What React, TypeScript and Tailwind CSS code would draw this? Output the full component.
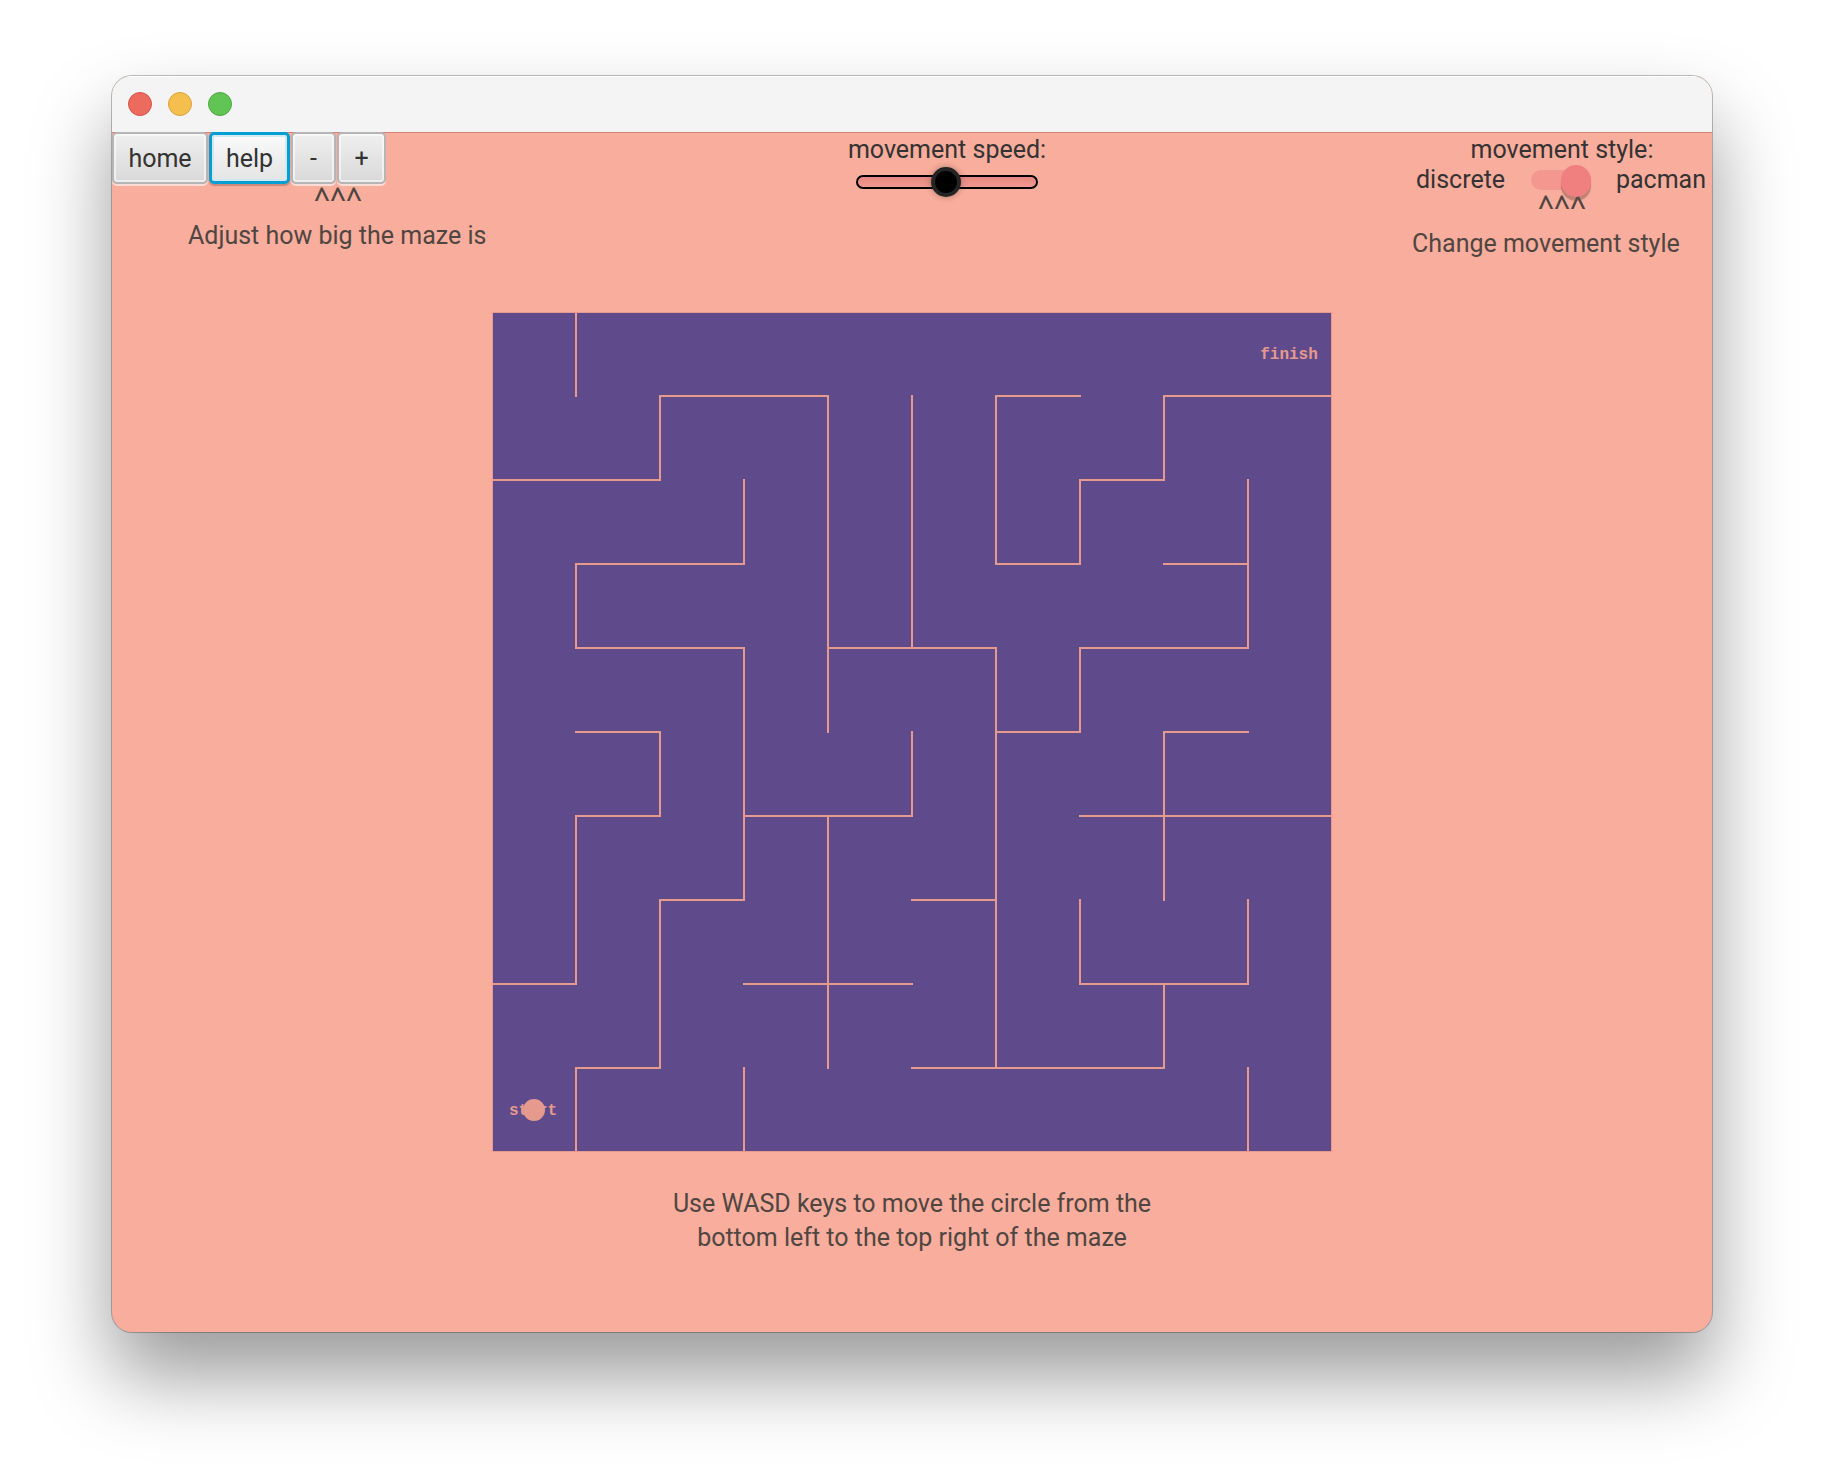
import { useState } from "react";

const CELL = 84;

// [line index, from, to] in cell units
const verticalWalls = [
  [1, 0, 1], [1, 3, 4], [1, 6, 8], [1, 9, 10],
  [2, 1, 2], [2, 5, 6], [2, 7, 9],
  [3, 2, 3], [3, 4, 7], [3, 9, 10],
  [4, 1, 5], [4, 6, 9],
  [5, 1, 4], [5, 5, 6],
  [6, 1, 3], [6, 4, 9],
  [7, 2, 3], [7, 4, 5], [7, 7, 8],
  [8, 1, 2], [8, 5, 7], [8, 8, 9],
  [9, 2, 4], [9, 7, 8], [9, 9, 10],
];

const horizontalWalls = [
  [1, 2, 4], [1, 6, 7], [1, 8, 10],
  [2, 0, 2], [2, 7, 8],
  [3, 1, 3], [3, 6, 7], [3, 8, 9],
  [4, 1, 3], [4, 4, 6], [4, 7, 9],
  [5, 1, 2], [5, 6, 7], [5, 8, 9],
  [6, 1, 2], [6, 3, 5], [6, 7, 10],
  [7, 2, 3], [7, 5, 6],
  [8, 0, 1], [8, 3, 5], [8, 7, 9],
  [9, 1, 2], [9, 5, 8],
];

const wallPath =
  verticalWalls.map(([x, a, b]) => `M${x * CELL} ${a * CELL}V${b * CELL}`).join("") +
  horizontalWalls.map(([y, a, b]) => `M${a * CELL} ${y * CELL}H${b * CELL}`).join("");

function Maze() {
  return (
    <svg viewBox="0 0 840 840" className="block w-full max-w-[840px]" role="img" aria-label="Maze">
      <rect width="840" height="840" fill="#5f4b8b" />
      <path d={wallPath} fill="none" stroke="#e69a8d" strokeWidth="2" strokeLinecap="square" />
      <rect width="840" height="840" fill="none" stroke="#e69a8d" strokeWidth="2" />
      <g
        fill="#e69a8d"
        fontSize="16"
        fontWeight="700"
        fontFamily="'Liberation Mono', monospace"
        textAnchor="middle"
      >
        <text x="41" y="803">start</text>
        <text x="797" y="47">finish</text>
      </g>
      <circle cx="42" cy="798" r="11" fill="#e69a8d" />
    </svg>
  );
}

function ToolButton({ label, className }: { label: string; className: string }) {
  return (
    <button
      type="button"
      className={`h-[52px] rounded-[5px] border-2 border-[#b5b5b5] bg-linear-to-b from-[#efefef] to-[#d9d9d9] pt-0.5 text-[#333] shadow-[0_2px_0_rgba(255,255,255,0.6),inset_0_0_0_2px_rgba(255,255,255,0.55)] ${className}`}
    >
      {label}
    </button>
  );
}

function Carets() {
  return (
    <p className="h-[35px] pl-[6px] text-center font-['Open_Sans',sans-serif] text-[28px] leading-[28px] font-semibold">
      ^^^
    </p>
  );
}

export default function App() {
  const [speed, setSpeed] = useState(49);
  const [pacman, setPacman] = useState(true);

  return (
    <div className="min-h-screen overflow-hidden bg-white px-28 pt-19 pb-37 font-[Roboto,sans-serif] text-[25px] leading-[34px] text-[#333]">
      <div className="overflow-hidden rounded-[20px] bg-[#f9ad9c] shadow-[0_0_0_1px_rgba(0,0,0,0.25),0_44px_80px_rgba(0,0,0,0.4)]">
        <div className="flex h-14 items-center gap-4 bg-[#f4f4f4] px-4 shadow-[inset_0_1px_0_#fff]">
          <span className="size-6 rounded-full border border-[#d5534a] bg-[#ed6a5e]" />
          <span className="size-6 rounded-full border border-[#d9a13c] bg-[#f5bf4f]" />
          <span className="size-6 rounded-full border border-[#4fa73f] bg-[#61c554]" />
        </div>

        <main className="flex min-h-[1200px] flex-col shadow-[inset_0_1px_0_#cf8577]">
          <header className="flex h-[180px] items-start justify-between">
            <div className="w-[370px]">
              <div className="flex gap-px">
                <ToolButton label="home" className="w-[96px]" />
                <button
                  type="button"
                  className="h-[52px] w-[81px] rounded-[5px] border-3 border-[#039ed3] bg-linear-to-b from-[#fafafa] to-[#e4e4e4] pt-0.5 text-[#333] shadow-[0_2px_1px_rgba(0,0,0,0.2),inset_0_0_0_2px_#d3e9f2]"
                >
                  help
                </button>
                <ToolButton label="-" className="w-[45px]" />
                <ToolButton label="+" className="w-[49px]" />
              </div>
              <div className="pl-[76px] text-center whitespace-nowrap text-[#4f4642]">
                <Carets />
                <p>Adjust how big the maze is</p>
              </div>
            </div>

            <div className="flex flex-col items-center pt-px">
              <label htmlFor="speed">movement speed:</label>
              <input
                id="speed"
                type="range"
                min={0}
                max={100}
                value={speed}
                onChange={(e) => setSpeed(Number(e.target.value))}
                className="h-[30px] w-[182px] appearance-none bg-transparent [&::-webkit-slider-runnable-track]:h-[14px] [&::-webkit-slider-runnable-track]:rounded-full [&::-webkit-slider-runnable-track]:border-2 [&::-webkit-slider-runnable-track]:border-black [&::-webkit-slider-runnable-track]:bg-linear-to-b [&::-webkit-slider-runnable-track]:from-[#e58780] [&::-webkit-slider-runnable-track]:to-[#f19a90] [&::-webkit-slider-thumb]:-mt-[10px] [&::-webkit-slider-thumb]:size-[30px] [&::-webkit-slider-thumb]:appearance-none [&::-webkit-slider-thumb]:rounded-full [&::-webkit-slider-thumb]:border-4 [&::-webkit-slider-thumb]:border-[#242424] [&::-webkit-slider-thumb]:bg-black [&::-webkit-slider-thumb]:shadow-[0_0_6px_rgba(0,0,0,0.3)]"
              />
            </div>

            <div className="w-[300px] pt-px pr-[6px]">
              <div className="pl-[6px] text-center">movement style:</div>
              <div className="flex h-[25px] items-center justify-between pl-1">
                <label htmlFor="style">discrete</label>
                <input
                  id="style"
                  type="checkbox"
                  role="switch"
                  checked={pacman}
                  onChange={(e) => setPacman(e.target.checked)}
                  className="relative h-5 w-[60px] appearance-none rounded-full bg-[#f4978f] before:absolute before:-top-[5px] before:left-0 before:h-8 before:w-[30px] before:rounded-full before:bg-[#f08080] before:shadow-[0_4px_1px_rgba(120,80,70,0.45)] checked:before:left-[30px]"
                />
                <label htmlFor="style">pacman</label>
              </div>
              <div className="whitespace-nowrap text-[#4f4642]">
                <Carets />
                <p>Change movement style</p>
              </div>
            </div>
          </header>

          <div className="flex justify-center">
            <Maze />
          </div>

          <p className="mt-[35px] text-center text-[#4f4642]">
            Use WASD keys to move the circle from the
            <br />
            bottom left to the top right of the maze
          </p>
        </main>
      </div>
    </div>
  );
}
